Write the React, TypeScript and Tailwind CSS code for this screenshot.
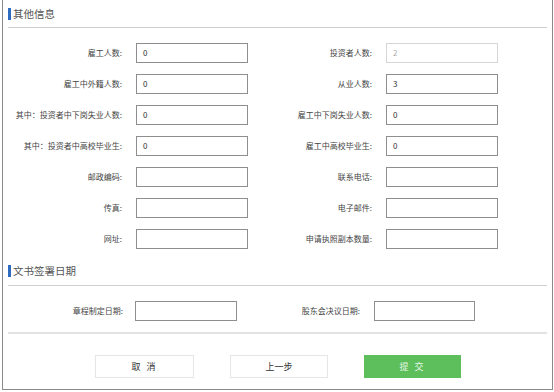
import React from "react";

const font = { fontFamily: '"Noto Sans CJK SC", "Noto Sans", sans-serif' };

function Field({
  label,
  value,
  disabled,
  labelW,
  gap,
  inputW,
  colW,
}: {
  label: string;
  value?: string;
  disabled?: boolean;
  labelW: string;
  gap: string;
  inputW: string;
  colW: string;
}) {
  return (
    <div className={`flex items-center ${colW}`}>
      <div className={`${labelW} text-right text-[8px] leading-none text-[#444] whitespace-nowrap`}>{label}</div>
      <div
        className={`${gap} ${inputW} h-[20px] flex items-center pl-[6px] text-[8px] leading-none border ${
          disabled ? "border-[#d6d6d6] text-[#aaa]" : "border-[#8e8e8e] text-[#333]"
        } bg-white`}
      >
        {value}
      </div>
    </div>
  );
}

function Heading({ text }: { text: string }) {
  return (
    <div className="flex items-center h-[12px]">
      <div className="w-[3px] h-[12px] bg-[#2e6cc2]" />
      <div className="ml-[2px] text-[10.5px] font-normal leading-none text-[#555]">{text}</div>
    </div>
  );
}

const rows: [string, string | undefined, string, string | undefined, boolean?][] = [
  ["雇工人数:", "0", "投资者人数:", "2", true],
  ["雇工中外籍人数:", "0", "从业人数:", "3"],
  ["其中：投资者中下岗失业人数:", "0", "雇工中下岗失业人数:", "0"],
  ["其中：投资者中高校毕业生:", "0", "雇工中高校毕业生:", "0"],
  ["邮政编码:", undefined, "联系电话:", undefined],
  ["传真:", undefined, "电子邮件:", undefined],
  ["网址:", undefined, "申请执照副本数量:", undefined],
];

export default function App() {
  return (
    <div className="w-[554px] h-[392px] bg-white" style={font}>
      <div className="ml-[2px] w-[551px] h-[390px] border border-t-0 border-[#8a8a8a] flex flex-col px-[5px]">
        <div className="mt-[8px]">
          <Heading text="其他信息" />
        </div>
        <div className="mt-[7px] border-t border-[#cfcfcf]" />
        <div className="mt-[15px] flex flex-col gap-[11px]">
          {rows.map(([l1, v1, l2, v2, dis]) => (
            <div key={l1} className="flex">
              <Field label={l1} value={v1} labelW="w-[114px]" gap="ml-[14px]" inputW="w-[112px]" colW="w-[250px]" />
              <Field label={l2} value={v2} disabled={dis} labelW="w-[114px]" gap="ml-[14px]" inputW="w-[112px]" colW="w-[250px]" />
            </div>
          ))}
        </div>
        <div className="mt-[16px]">
          <Heading text="文书签署日期" />
        </div>
        <div className="mt-[8px] border-t border-[#cfcfcf]" />
        <div className="mt-[15px] flex">
          <Field label="章程制定日期:" labelW="w-[115px]" gap="ml-[12px]" inputW="w-[102px]" colW="w-[238px]" />
          <Field label="股东会决议日期:" labelW="w-[114px]" gap="ml-[14px]" inputW="w-[101px]" colW="w-[250px]" />
        </div>
        <div className="mt-[11px] border-t-2 border-[#e2e2e2]" />
        <div className="mt-[21px] ml-[87px] flex gap-[36px]">
          <button className="w-[99px] h-[23px] border border-[#e6e6e6] bg-white text-[9px] text-[#333] tracking-[2px]">
            取 消
          </button>
          <button className="w-[98px] h-[23px] border border-[#e6e6e6] bg-white text-[9px] text-[#333]">
            上一步
          </button>
          <button className="w-[97px] h-[23px] bg-[#5cbf5c] text-[9px] text-[#e8f6e8] tracking-[2px]">
            提 交
          </button>
        </div>
      </div>
    </div>
  );
}
